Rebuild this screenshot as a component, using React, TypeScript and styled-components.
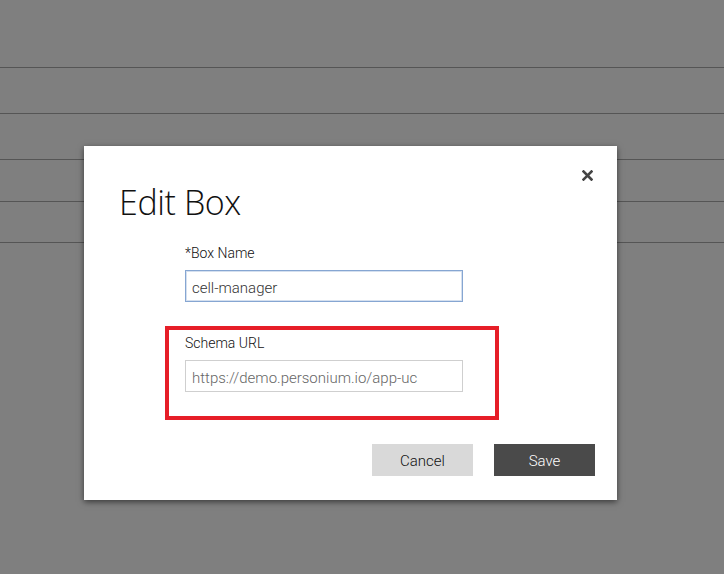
import React from 'react'
import styled, { createGlobalStyle } from 'styled-components'

const GlobalStyle = createGlobalStyle`
  html, body, #root {
    height: 100%;
  }
  body {
    margin: 0;
    font-family: Roboto, "Liberation Sans", sans-serif;
    overflow: hidden;
  }
`

const Page = styled.div`
  position: relative;
  height: 100%;
  background: #fff;
`

const ListHeader = styled.div`
  height: 67px;
  border-bottom: 1px solid #aaa;
`

const ListRow = styled.div<{ $h: number }>`
  height: ${(p) => p.$h}px;
  border-bottom: 1px solid #aaa;
`

const Overlay = styled.div`
  position: absolute;
  inset: 0;
  background: rgba(0, 0, 0, 0.5);
`

const Modal = styled.div`
  position: absolute;
  left: 84px;
  top: 146px;
  width: 533px;
  box-sizing: border-box;
  background: #fff;
  box-shadow: 0 2px 6px rgba(0, 0, 0, 0.55);
  padding: 34px 22px 24px 35px;
  display: flex;
  flex-direction: column;
`

const CloseButton = styled.button`
  position: absolute;
  top: 24px;
  right: 24px;
  width: 11px;
  height: 11px;
  padding: 0;
  border: 0;
  background: none;
  cursor: pointer;
  display: flex;
`

const Title = styled.h2`
  margin: 0;
  font-family: "Open Sans", Roboto, sans-serif;
  font-size: 34px;
  letter-spacing: -0.4px;
  line-height: 44px;
  font-weight: 100;
  color: #111;
`

const Form = styled.div`
  display: flex;
  flex-direction: column;
  align-items: flex-start;
  padding-left: 46px;
  margin-top: 20px;
`

const Field = styled.div<{ $highlight?: boolean }>`
  display: flex;
  flex-direction: column;
  padding: ${(p) => (p.$highlight ? '4px 32px 24px 16px' : '0 0 0 20px')};
  border: ${(p) => (p.$highlight ? '4px solid #e61e28' : '0')};
  margin-top: ${(p) => (p.$highlight ? '24px' : '0')};
`

const Label = styled.label`
  font-size: 14px;
  font-weight: 300;
  line-height: 18px;
  color: #111;
  margin-bottom: 8px;
`

const Input = styled.input<{ $focused?: boolean }>`
  width: 278px;
  height: 32px;
  box-sizing: border-box;
  padding: 3px 6px 0;
  font-family: Roboto, "Liberation Sans", sans-serif;
  font-size: 15px;
  font-weight: 300;
  color: ${(p) => (p.$focused ? '#333' : '#666')};
  border: 1px solid ${(p) => (p.$focused ? '#86a6d2' : '#cfcfcf')};
  box-shadow: ${(p) => (p.$focused ? 'inset 0 0 0 1px rgba(134, 166, 210, 0.35)' : 'none')};
  outline: none;
  background: #fff;
`

const Actions = styled.div`
  display: flex;
  justify-content: flex-end;
  gap: 21px;
  margin-top: 24px;
`

const ActionButton = styled.button<{ $primary?: boolean }>`
  width: 101px;
  height: 32px;
  padding: 2px 0 0;
  border: 0;
  font-family: Roboto, "Liberation Sans", sans-serif;
  font-size: 15px;
  font-weight: 300;
  background: ${(p) => (p.$primary ? '#4a4a4a' : '#d9d9d9')};
  color: ${(p) => (p.$primary ? '#fff' : '#111')};
  cursor: pointer;
`

export default function App() {
  return (
    <>
      <GlobalStyle />
      <Page>
        <ListHeader />
        <ListRow $h={45} />
        <ListRow $h={45} />
        <ListRow $h={41} />
        <ListRow $h={40} />
        <Overlay />
        <Modal>
          <CloseButton aria-label="Close">
            <svg width="11" height="11" viewBox="0 0 11 11">
              <path d="M1.5 1.5 L9.5 9.5 M9.5 1.5 L1.5 9.5" stroke="#444" strokeWidth="2.6" strokeLinecap="square" />
            </svg>
          </CloseButton>
          <Title>Edit Box</Title>
          <Form>
            <Field>
              <Label>*Box Name</Label>
              <Input $focused defaultValue="cell-manager" />
            </Field>
            <Field $highlight>
              <Label>Schema URL</Label>
              <Input defaultValue="https://demo.personium.io/app-uc" />
            </Field>
          </Form>
          <Actions>
            <ActionButton>Cancel</ActionButton>
            <ActionButton $primary>Save</ActionButton>
          </Actions>
        </Modal>
      </Page>
    </>
  )
}
